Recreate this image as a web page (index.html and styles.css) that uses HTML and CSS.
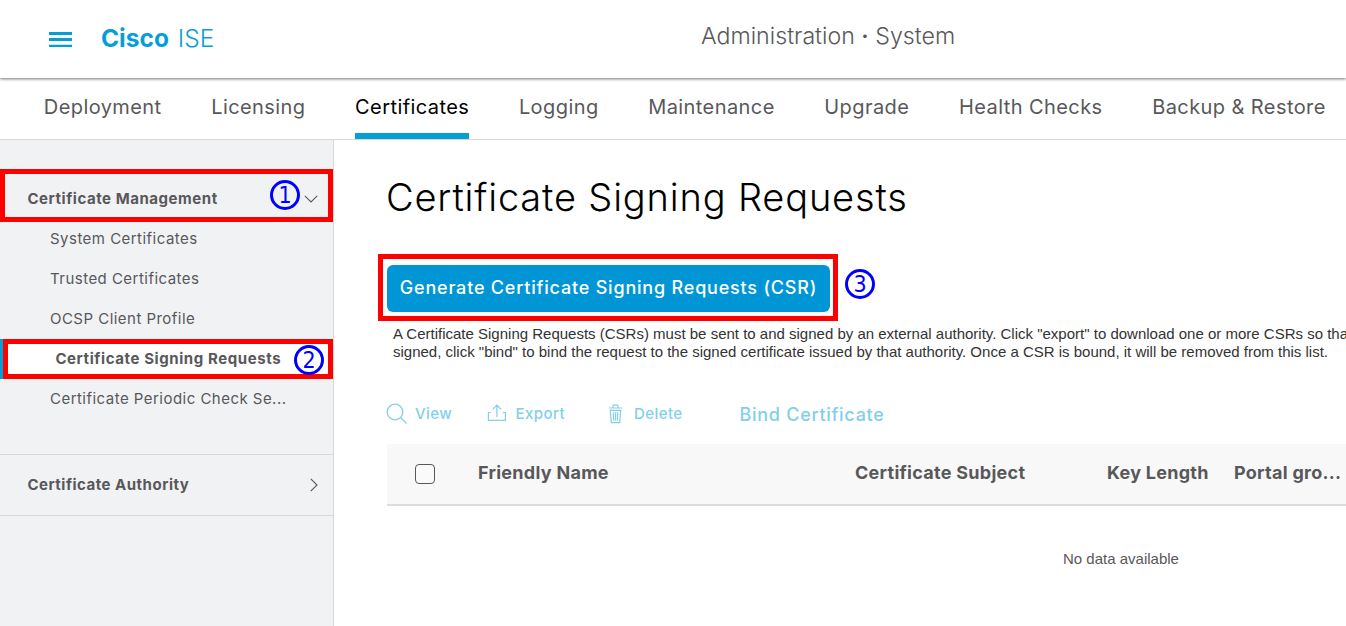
FILE: index.html
```html
<!DOCTYPE html>
<html lang="en">
<head>
<meta charset="utf-8">
<title>Cisco ISE - Administration - System</title>
<link rel="stylesheet" href="styles.css">
</head>
<body>
<header class="topbar">
  <svg class="menu-icon" width="23" height="15" viewBox="0 0 23 15"><path d="M0 0h23v3H0zM0 6h23v3H0zM0 12.7h23V15H0z" fill="#049fd9"/></svg>
  <div class="brand"><b>Cisco</b> <span>ISE</span></div>
  <div class="page-path">Administration <b>·</b> System</div>
</header>
<nav class="tabs">
  <a class="tab">Deployment</a>
  <a class="tab">Licensing</a>
  <a class="tab active">Certificates</a>
  <a class="tab">Logging</a>
  <a class="tab">Maintenance</a>
  <a class="tab">Upgrade</a>
  <a class="tab">Health Checks</a>
  <a class="tab">Backup &amp; Restore</a>
</nav>
<div class="body">
  <aside class="sidebar">
    <div class="group-head">
      <span>Certificate Management</span>
      <svg width="14" height="8" viewBox="0 0 14 8"><path d="M.8.8L7 7 13.2.8" fill="none" stroke="#58585b" stroke-width="1.1"/></svg>
      <span class="step step-1">1</span>
    </div>
    <div class="items">
      <a class="item">System Certificates</a>
      <a class="item">Trusted Certificates</a>
      <a class="item">OCSP Client Profile</a>
      <div class="item-current">
        <div class="item-box">Certificate Signing Requests<span class="step step-2">2</span></div>
      </div>
      <a class="item">Certificate Periodic Check Se...</a>
    </div>
    <div class="group-next">
      <span>Certificate Authority</span>
      <svg width="8" height="14" viewBox="0 0 8 14"><path d="M.8.8L7 7 .8 13.2" fill="none" stroke="#58585b" stroke-width="1.1"/></svg>
    </div>
  </aside>
  <main class="content">
    <h1 class="title">Certificate Signing Requests</h1>
    <div class="action">
      <div class="button-frame"><button class="primary">Generate Certificate Signing Requests (CSR)</button></div>
      <span class="step step-3">3</span>
    </div>
    <p class="note">A Certificate Signing Requests (CSRs) must be sent to and signed by an external authority. Click "export" to download one or more CSRs so that<br>signed, click "bind" to bind the request to the signed certificate issued by that authority. Once a CSR is bound, it will be removed from this list.</p>
    <div class="toolbar">
      <svg width="22" height="22" viewBox="0 0 22 22" fill="none" stroke="#82cfec" stroke-width="1.3"><circle cx="9" cy="9" r="7.8"/><path d="M14.5 14.5l6 6"/></svg>
      <span>View</span>
      <svg class="export-icon" width="20" height="18" viewBox="0 0 20 18" fill="none" stroke="#82cfec" stroke-width="1.2"><path d="M4 8.5H1.4v7.9h17V8.5h-2.6M9.9 13V1.6M5.7 5.4l4.2-4.2 4.2 4.2"/></svg>
      <span>Export</span>
      <svg width="15" height="20" viewBox="0 0 15 20" fill="none" stroke="#82cfec" stroke-width="1.2"><path d="M1 4h13M4.7 3.6l.6-2.4h4.4l.6 2.4M1.6 6.3h11.8M2.3 6.3l1 12.4h8.4l1-12.4M5.3 8.3l.3 8.2M7.5 8.3v8.2M9.7 8.3l-.3 8.2"/></svg>
      <span>Delete</span>
      <span class="bind">Bind Certificate</span>
    </div>
    <div class="thead">
      <span class="checkbox"></span>
      <span>Friendly Name</span>
      <span>Certificate Subject</span>
      <span>Key Length</span>
      <span>Portal gro...</span>
    </div>
    <div class="empty">No data available</div>
  </main>
</div>
</body>
</html>
```
FILE: styles.css
```css
* { box-sizing: border-box; }

body {
  margin: 0;
  width: 1346px;
  height: 626px;
  overflow: hidden;
  display: flex;
  flex-direction: column;
  background: #fff;
  color: #58585b;
  font-family: Inter, "Liberation Sans", sans-serif;
  white-space: nowrap;
}

/* Header */
.topbar {
  height: 78px;
  flex: none;
  display: flex;
  align-items: center;
  padding-left: 49px;
  box-shadow: 0 1px 3px rgba(0, 0, 0, .55);
}
.menu-icon { margin-right: 29px; margin-top: 1px; }
.brand { width: 600px; color: #049fd9; font-size: 24.5px; font-weight: 300; padding-bottom: 2px; }
.brand b { font-weight: 700; margin-right: 2px; }
.page-path { font-size: 23.2px; font-weight: 300; padding-bottom: 6px; }
.page-path b { font-weight: 600; }

/* Tabs */
.tabs {
  height: 62px;
  flex: none;
  display: flex;
  gap: 49.6px;
  padding-left: 43.8px;
  border-bottom: 1px solid #d8d8d9;
}
.tab { height: 61px; font-size: 20px; line-height: 58px; letter-spacing: .42px; }
.tab.active { color: #000; border-bottom: 6px solid #049fd9; }

/* Sidebar */
.body { flex: 1; display: flex; min-height: 0; }
.sidebar {
  width: 334px;
  flex: none;
  padding-top: 29px;
  background: #f1f2f4;
  border-right: 1px solid #d8d8d9;
  font-size: 15px;
}
.group-head {
  height: 53px;
  display: flex;
  align-items: center;
  justify-content: space-between;
  padding: 6px 10px 0 22.4px;
  border: 5px solid #f00;
  font-weight: 700;
  letter-spacing: .55px;
  position: relative;
}
.items { margin-top: -3px; }
.item { display: block; height: 40px; line-height: 40px; padding-left: 50px; letter-spacing: .47px; }
.item-current { height: 40px; border-left: 3px solid #049fd9; }
.item-box {
  height: 40px;
  padding-left: 47.4px;
  border: 5px solid #f00;
  background: #fff;
  line-height: 30px;
  font-weight: 700;
  letter-spacing: .59px;
  position: relative;
}
.group-next {
  height: 62px;
  margin-top: 35px;
  padding: 0 15px 0 27.4px;
  display: flex;
  align-items: center;
  justify-content: space-between;
  border: 1px solid #d8d8d9;
  border-width: 1px 0;
  font-weight: 700;
  letter-spacing: .5px;
}
.group-next span { padding-bottom: 2px; }

/* Numbered step markers */
.step {
  width: 30px;
  height: 30px;
  border: 3px solid #00f;
  border-radius: 50%;
  color: #00f;
  font: 23px/24px "DejaVu Sans Condensed", "DejaVu Sans", sans-serif;
  text-align: center;
  letter-spacing: 0;
}
.step-1 { position: absolute; left: 265px; top: 6px; }
.step-2 { position: absolute; left: 286px; top: 1px; }
.step-3 { margin: 15px 0 0 7px; }

/* Content */
.content { flex: 1; min-width: 0; padding-left: 53px; }
.title {
  margin: 27px 0 27px -1px;
  color: #000;
  font-size: 38px;
  font-weight: 300;
  line-height: 60px;
  letter-spacing: .83px;
}
.action { display: flex; }
.button-frame { width: 460px; height: 67px; margin-left: -9px; padding: 6px 4px; border: 5px solid #f00; }
.primary {
  width: 443px;
  height: 47px;
  padding: 0 0 2px;
  border: 0;
  border-radius: 6px;
  background: #0096d6;
  color: #fff;
  font: 500 18px Inter, sans-serif;
  letter-spacing: .8px;
}
.note { margin: 4px 0 0 6px; font: 15px/18px "Liberation Sans", Arial, sans-serif; color: #333; }
.toolbar {
  height: 60px;
  margin: 23px 0 0 -1px;
  display: grid;
  grid-template-columns: 29px 71.5px 29px 92.5px 26px 105.5px auto;
  align-items: center;
  color: #82cfec;
  font-size: 15px;
  font-weight: 500;
  letter-spacing: .42px;
}
.toolbar span { padding-bottom: 1px; }
.toolbar .export-icon { margin-bottom: 3px; }
.toolbar .bind { font-size: 18px; letter-spacing: .72px; padding-bottom: 0; }

/* Table */
.thead {
  height: 62px;
  display: grid;
  grid-template-columns: 91px 377px 252px 127px 120px;
  align-items: center;
  background: #f8f8f8;
  border-bottom: 2px solid #dcdcdd;
  font-size: 18px;
  font-weight: 700;
  letter-spacing: .27px;
}
.thead span { padding-bottom: 4px; }
.thead .checkbox { width: 20px; height: 20px; margin-left: 28px; border: 1px solid #58585b; border-radius: 4px; background: #fafafa; }
.empty { margin: 44px 0 0 676px; font: 15px/18px "Liberation Sans", Arial, sans-serif; }
```
